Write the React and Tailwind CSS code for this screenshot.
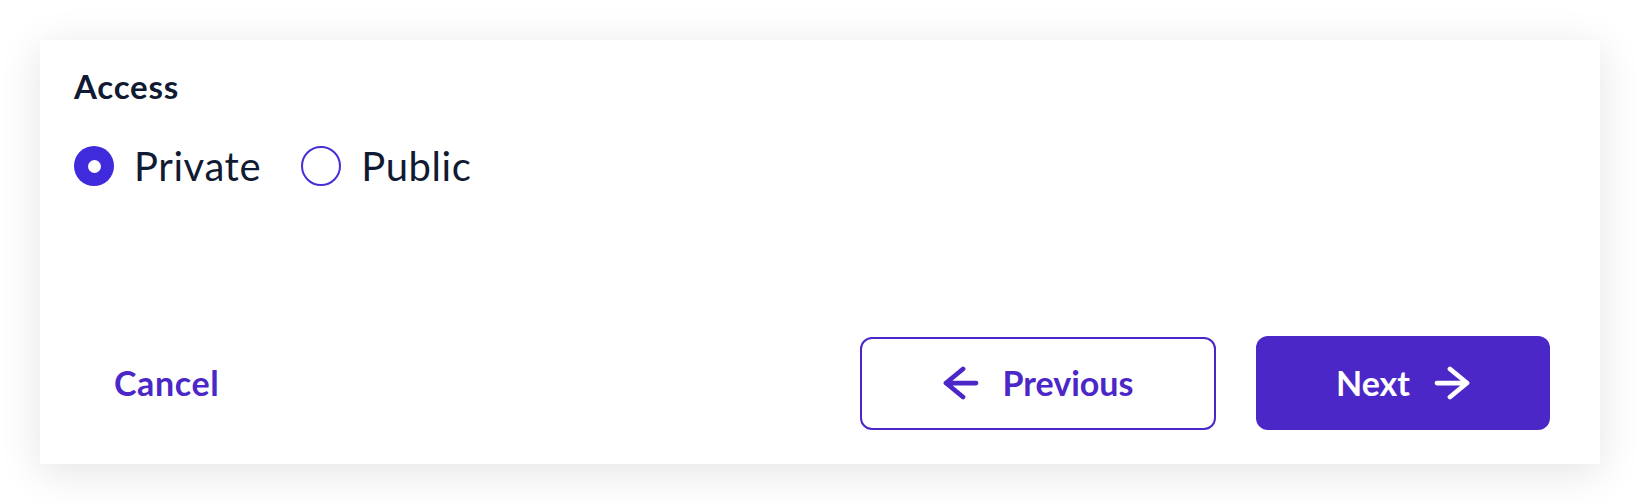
import { useState } from 'react';

const FONT = { fontFamily: 'Lato, "Open Sans", sans-serif' };

function ArrowIcon({ dir = 'left' }) {
  const d = dir === 'left'
    ? 'M3 17H33M20 3L3 17L20 31'
    : 'M3 17H33M16 3L33 17L16 31';
  return (
    <svg width="36" height="34" viewBox="0 0 36 34" fill="none" className="shrink-0">
      <path d={d} stroke="currentColor" strokeWidth="4.75" strokeLinecap="round" strokeLinejoin="round" />
    </svg>
  );
}

function Radio({ checked, label, onClick }) {
  return (
    <button type="button" onClick={onClick} className="flex items-center gap-5 cursor-pointer">
      {checked ? (
        <span className="w-10 h-10 rounded-full bg-[#3f2bdc] flex items-center justify-center">
          <span className="w-[13px] h-[13px] rounded-full bg-white" />
        </span>
      ) : (
        <span className="w-10 h-10 rounded-full border-2 border-[#4530d8] bg-white" />
      )}
      <span className="text-[40px] leading-[48px] tracking-[0.6px] text-[#111a33]">{label}</span>
    </button>
  );
}

export default function App() {
  const [access, setAccess] = useState('private');

  return (
    <div className="w-[1640px] h-[504px] bg-white pt-10 pl-10" style={FONT}>
      <div className="w-[1560px] h-[424px] bg-white shadow-[0_8px_40px_rgba(0,0,0,0.11)] flex flex-col justify-between pl-[34px] pr-[50px] pt-[26px] pb-[34px]">
        {/* Access options */}
        <div className="flex flex-col gap-9">
          <h3 className="text-[33px] leading-[40px] tracking-[0.8px] font-bold text-[#111a33]">Access</h3>
          <div className="flex items-center gap-10">
            <Radio checked={access === 'private'} label="Private" onClick={() => setAccess('private')} />
            <Radio checked={access === 'public'} label="Public" onClick={() => setAccess('public')} />
          </div>
        </div>

        {/* Footer actions */}
        <div className="flex items-center justify-between">
          <button type="button" className="h-[93px] pl-10 text-[34px] leading-[40px] tracking-[0.6px] font-bold text-[#4b27c8]">
            Cancel
          </button>
          <div className="flex items-center gap-10">
            <button
              type="button"
              className="w-[356px] h-[93px] rounded-xl border-2 border-[#4b27c8] bg-white text-[#4b27c8] flex items-center justify-center gap-6 text-[34px] leading-[40px] font-bold"
            >
              <ArrowIcon dir="left" />
              Previous
            </button>
            <button
              type="button"
              className="w-[294px] h-[94px] rounded-xl bg-[#4b27c8] text-white flex items-center justify-center gap-6 text-[34px] leading-[40px] font-bold"
            >
              Next
              <ArrowIcon dir="right" />
            </button>
          </div>
        </div>
      </div>
    </div>
  );
}
